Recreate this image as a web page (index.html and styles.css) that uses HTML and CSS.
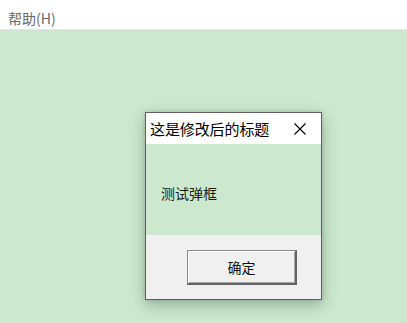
FILE: index.html
```html
<!DOCTYPE html>
<html lang="zh">
<head>
<meta charset="utf-8">
<title>弹框</title>
<link rel="stylesheet" href="styles.css">
</head>
<body>
<div class="menubar"><span class="menu-item">帮助(H)</span></div>
<div class="desktop">
  <div class="dialog">
    <div class="dialog-title">
      <span class="title-text">这是修改后的标题</span>
      <svg class="close" width="12" height="12" viewBox="0 0 12 12"><path d="M0.5 0.5L11.5 11.5M11.5 0.5L0.5 11.5" stroke="#000" stroke-width="1.1" fill="none"/></svg>
    </div>
    <div class="dialog-body"><span class="msg">测试弹框</span></div>
    <div class="dialog-footer"><button class="btn">确定</button></div>
  </div>
</div>
</body>
</html>
```
FILE: styles.css
```css
html, body {
  margin: 0;
  padding: 0;
  height: 100%;
  overflow: hidden;
}
body {
  background: #cce8cf;
  font-family: "Noto Sans CJK SC", "Microsoft YaHei", sans-serif;
}
.menubar {
  height: 29px;
  background: #fff;
  border-bottom: 1px solid #e6e6e6;
  padding-left: 8px;
  padding-top: 8px;
  box-sizing: border-box;
  height: 30px;
}
.menu-item {
  display: block;
  font-size: 14px;
  color: #6a6a6a;
  line-height: 20px;
}
.desktop {
  padding-top: 82px;
  padding-left: 145px;
}
.dialog {
  width: 175px;
  height: 186px;
  border: 1px solid #5f5f5f;
  box-shadow: 0 5px 14px rgba(0, 40, 10, 0.28), 0 0 4px rgba(0, 40, 10, 0.15);
  display: flex;
  flex-direction: column;
}
.dialog-title {
  height: 31px;
  background: #fff;
  display: flex;
  align-items: center;
  justify-content: space-between;
  padding-left: 4px;
  padding-right: 15px;
}
.title-text {
  font-size: 15px;
  color: #000;
  line-height: 20px;
  letter-spacing: -0.1px;
}
.close {
  display: block;
  margin-top: 1px;
}
.dialog-body {
  height: 91px;
  background: #cce8cf;
  padding-left: 15px;
  padding-top: 36px;
  box-sizing: border-box;
}
.msg {
  font-size: 14px;
  line-height: 20px;
  color: #1a1a1a;
}
.dialog-footer {
  flex: 1;
  background: #f0f0f0;
  padding-top: 15px;
  padding-left: 41px;
  box-sizing: border-box;
}
.btn {
  width: 110px;
  height: 35px;
  margin: 0;
  padding: 0;
  background: #f0f0f0;
  border-style: solid;
  border-top: 1px solid #8a8a8a;
  border-left: 1px solid #8a8a8a;
  border-right: 2px solid #646464;
  border-bottom: 2px solid #646464;
  box-shadow: inset 1px 1px #ffffff, inset -1px -1px #a8a8a8;
  font-family: "Noto Sans CJK SC", sans-serif;
  font-size: 14px;
  color: #111;
  line-height: 20px;
  display: block;
}
```
